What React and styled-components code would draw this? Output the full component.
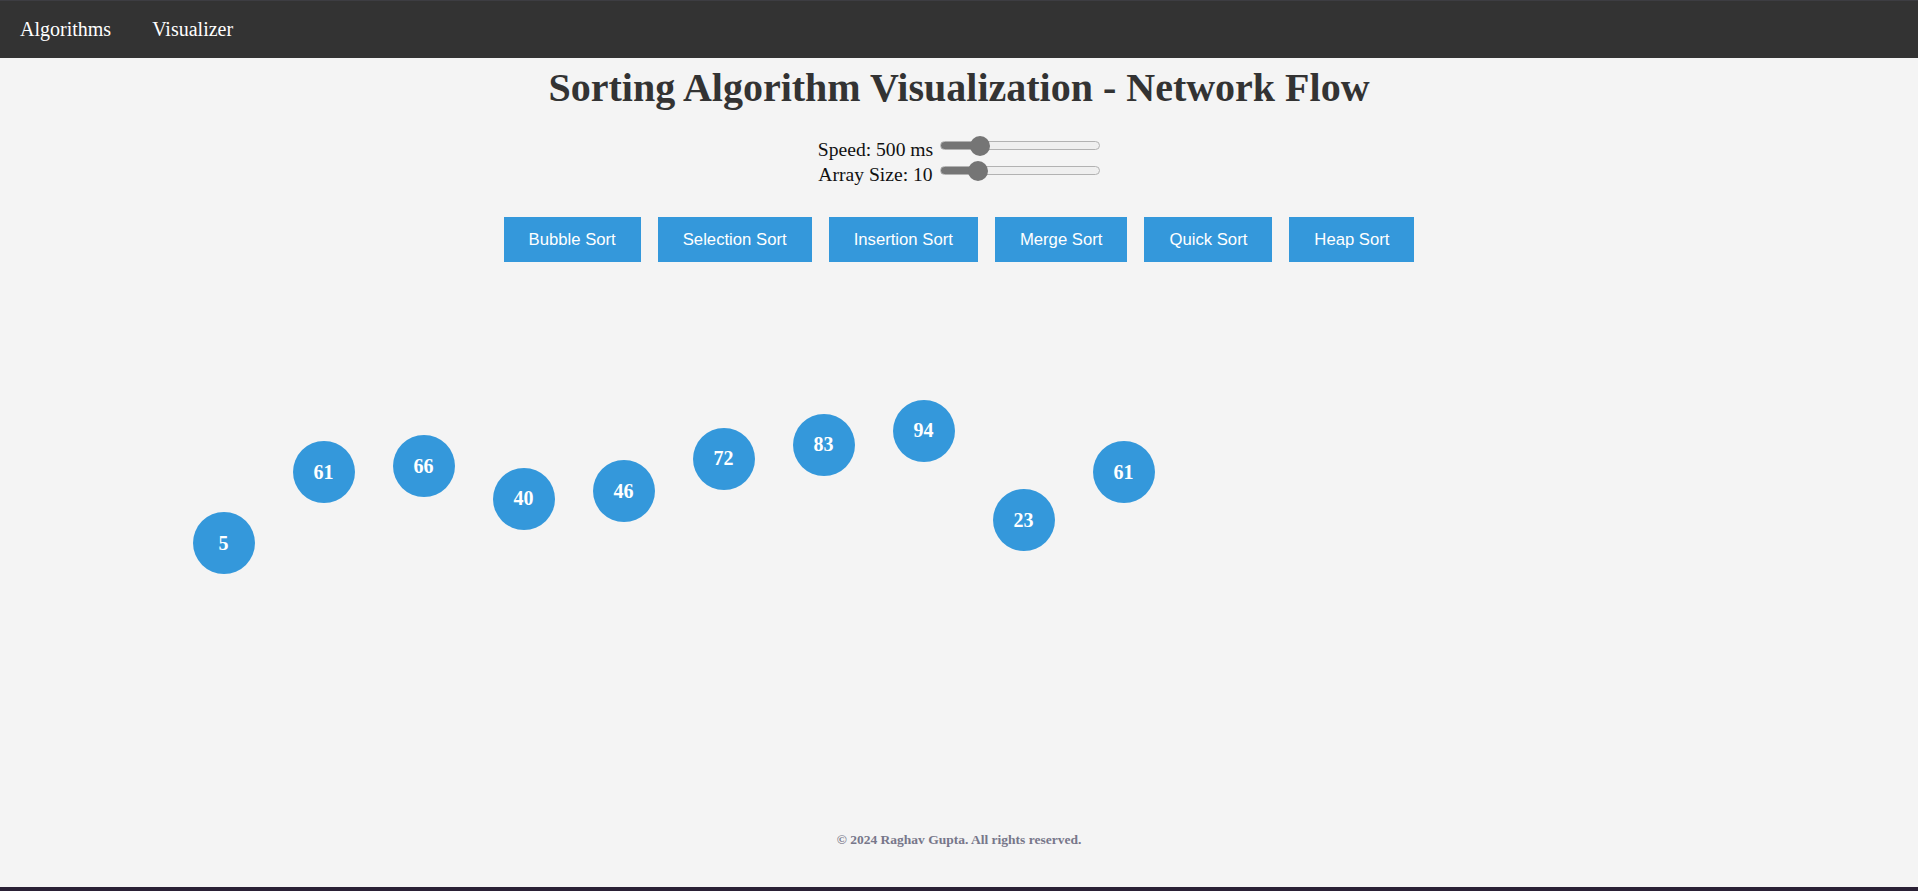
import { useState } from 'react';
import styled, { createGlobalStyle } from 'styled-components';

const GlobalStyle = createGlobalStyle`
    html, body {
        margin: 0;
        padding: 0;
        background: #f4f4f4;
        font-family: "Liberation Serif", "Times New Roman", serif;
        color: #111;
    }
`;

const ALGORITHMS = ['Bubble Sort', 'Selection Sort', 'Insertion Sort', 'Merge Sort', 'Quick Sort', 'Heap Sort'];
const VALUES = [5, 61, 66, 40, 46, 72, 83, 94, 23, 61];

const SLIDER_WIDTH = 160;
const THUMB = 20;

const fillPercent = (value, min, max) => {
    const frac = (value - min) / (max - min);
    return ((THUMB / 2 + frac * (SLIDER_WIDTH - THUMB)) / SLIDER_WIDTH) * 100;
};

const Page = styled.div`
    min-height: 100vh;
    display: flex;
    flex-direction: column;
`;

const Navbar = styled.nav`
    height: 58px;
    box-sizing: border-box;
    background: #333;
    border-top: 1px solid #3d3d42;
    display: flex;
    align-items: center;
    gap: 41px;
    padding-left: 20px;
`;

const NavLink = styled.a`
    color: #fff;
    font-size: 20px;
    line-height: 23px;
    text-decoration: none;
    cursor: pointer;
`;

const Main = styled.main`
    flex: 1;
    display: flex;
    flex-direction: column;
`;

const Title = styled.h1`
    margin: 7px 0 0;
    font-size: 40px;
    line-height: 45px;
    font-weight: bold;
    text-align: center;
    color: #333;
`;

const Controls = styled.div`
    margin-top: 27px;
    display: flex;
    flex-direction: column;
`;

const ControlRow = styled.label`
    display: flex;
    justify-content: center;
    align-items: center;
    height: 25px;
    font-size: 19.6px;
    line-height: 25px;
    color: #111;
`;

const Slider = styled.input.attrs({ type: 'range' })`
    -webkit-appearance: none;
    appearance: none;
    width: ${SLIDER_WIDTH}px;
    height: ${THUMB}px;
    margin: 0 0 8px 7px;
    padding: 0;
    background: transparent;
    cursor: pointer;

    &::-webkit-slider-runnable-track {
        box-sizing: border-box;
        height: 9px;
        border-radius: 5px;
        border: 1px solid #b2b2b2;
        background: linear-gradient(
            to right,
            #757575 ${(p) => p.$fill}%,
            #efefef ${(p) => p.$fill}%
        );
    }

    &::-webkit-slider-thumb {
        -webkit-appearance: none;
        width: ${THUMB}px;
        height: ${THUMB}px;
        border: none;
        border-radius: 50%;
        background: #757575;
        margin-top: -6.5px;
    }
`;

const ButtonBar = styled.div`
    margin-top: 30px;
    display: flex;
    justify-content: center;
    gap: 17px;
`;

const SortButton = styled.button`
    border: none;
    background: #3498db;
    color: #fff;
    font-family: "Liberation Sans", Arial, sans-serif;
    font-size: 16.7px;
    line-height: 19px;
    padding: 13px 25px;
    cursor: pointer;
`;

const Canvas = styled.div`
    position: relative;
    flex: 1;
`;

const Node = styled.div`
    position: absolute;
    width: 62px;
    height: 62px;
    border-radius: 50%;
    background: #3498db;
    color: #fff;
    display: flex;
    align-items: center;
    justify-content: center;
    font-size: 20px;
    font-weight: bold;
`;

const Footer = styled.footer`
    padding: 22px 0 40px;
    text-align: center;
    font-size: 13.5px;
    line-height: 15px;
    font-weight: bold;
    color: #77778a;
`;

const BottomBar = styled.div`
    height: 4px;
    background: #2a2035;
`;

export default function App() {
    const [speed, setSpeed] = useState(500);
    const [size, setSize] = useState(10);

    return (
        <Page>
            <GlobalStyle />
            <Navbar>
                <NavLink>Algorithms</NavLink>
                <NavLink>Visualizer</NavLink>
            </Navbar>
            <Main>
                <Title>Sorting Algorithm Visualization - Network Flow</Title>
                <Controls>
                    <ControlRow>
                        Speed: {speed} ms
                        <Slider
                            min={100}
                            max={2000}
                            value={speed}
                            $fill={fillPercent(speed, 100, 2000)}
                            onChange={(e) => setSpeed(Number(e.target.value))}
                        />
                    </ControlRow>
                    <ControlRow>
                        Array Size: {size}
                        <Slider
                            min={5}
                            max={30}
                            value={size}
                            $fill={fillPercent(size, 5, 30)}
                            onChange={(e) => setSize(Number(e.target.value))}
                        />
                    </ControlRow>
                </Controls>
                <ButtonBar>
                    {ALGORITHMS.map((name) => (
                        <SortButton key={name}>{name}</SortButton>
                    ))}
                </ButtonBar>
                <Canvas>
                    {VALUES.map((v, i) => (
                        <Node key={i} style={{ left: 192.5 + i * 100, top: 256.3 - 1.26 * v }}>
                            {v}
                        </Node>
                    ))}
                </Canvas>
            </Main>
            <Footer>© 2024 Raghav Gupta. All rights reserved.</Footer>
            <BottomBar />
        </Page>
    );
}
